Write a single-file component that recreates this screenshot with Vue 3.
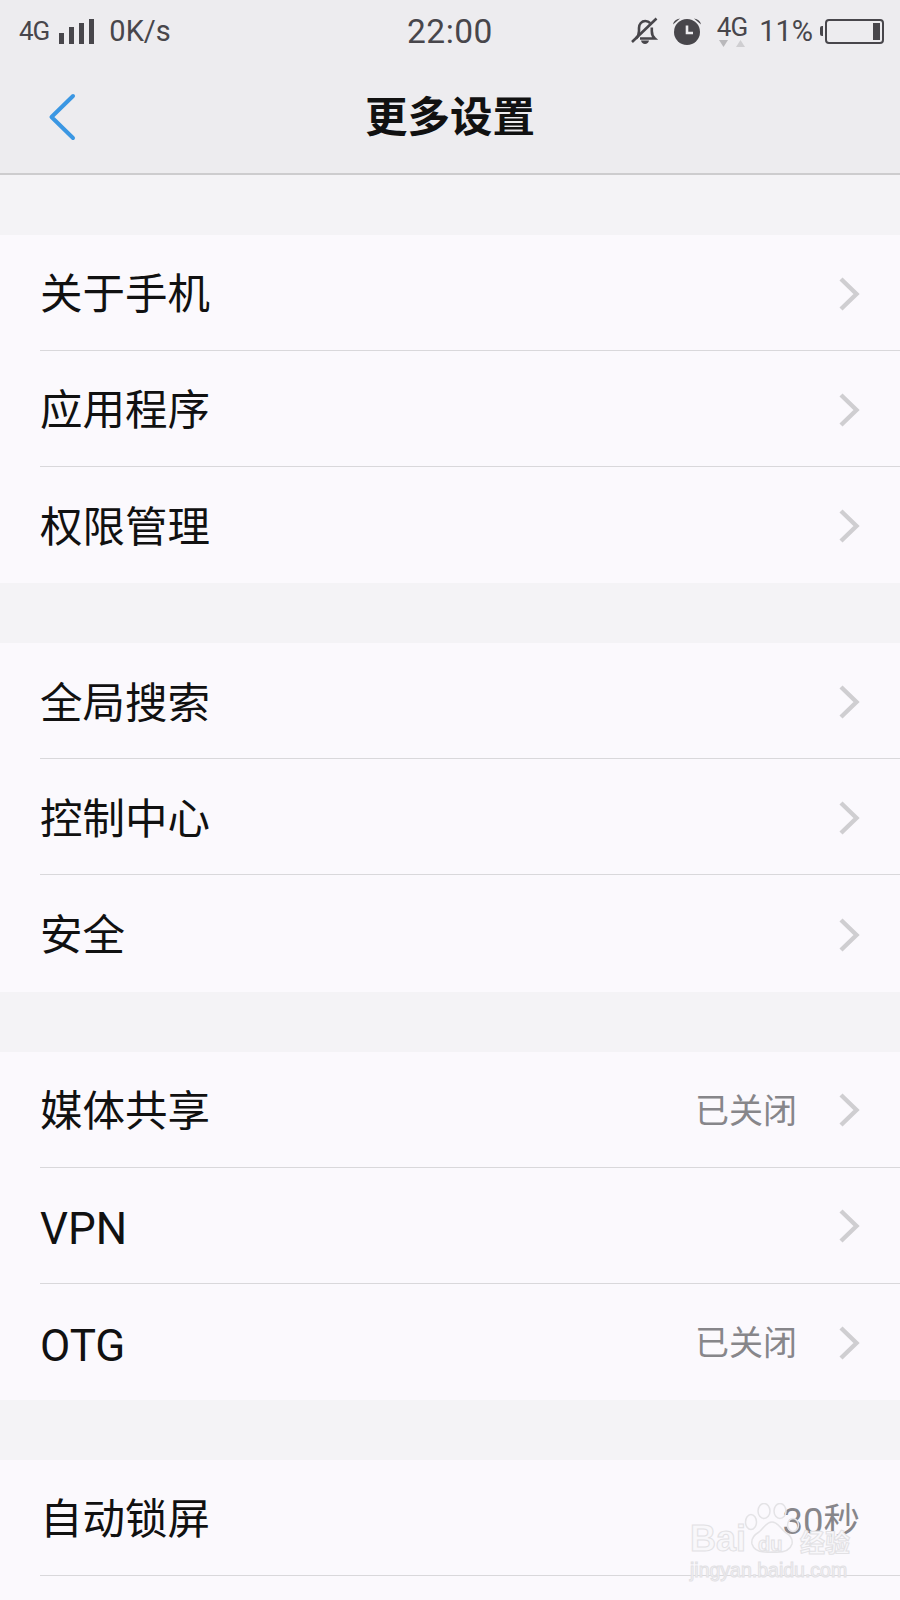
<template>
  <div class="page">
    <div class="topbar">
      <div class="status">
        <div class="status-left">
          <span class="net">4G</span>
          <div class="signal">
            <i v-for="h in bars" :key="h" :style="{ height: h + 'px' }"></i>
          </div>
          <span class="speed">0K/s</span>
        </div>
        <span class="time">22:00</span>
        <div class="status-right">
          <svg class="ic-bell" width="30" height="30" viewBox="0 0 30 30">
            <path d="M6 22.500c2.200-2 3-4 3-7.500V12c0-4 2.700-7 6.300-7 2 0 3.700.8 4.900 2.200M21.800 11.500V15c0 3.500.8 5.500 3 7.500H10" fill="none" stroke="#48464b" stroke-width="2.600" />
            <path d="M11 24.500h8c-.4 2.300-2 3.500-4 3.500s-3.600-1.200-4-3.500z" fill="#48464b" />
            <path d="M2 26 26.500 2.500" stroke="#48464b" stroke-width="2.600" />
          </svg>
          <svg class="ic-alarm" width="30" height="30" viewBox="0 0 30 30">
            <circle cx="15" cy="16" r="13" fill="#48464b" />
            <path d="M15 9.500V17h6" fill="none" stroke="#edecef" stroke-width="2.600" />
            <path d="M1 8.500C1.500 5 4 3 8 2.500zM29 8.500C28.500 5 26 3 22 2.500z" fill="#48464b" />
          </svg>
          <div class="lte">
            <span>4G</span>
            <svg width="28" height="9" viewBox="0 0 28 9">
              <path d="M1 1h9L5.500 8z" fill="#b9b8bb" />
              <path d="M18 8h9L22.500 1z" fill="#cfced1" />
            </svg>
          </div>
          <span class="pct">11%</span>
          <div class="battery">
            <i class="nub"></i>
            <div class="cell"><i></i></div>
          </div>
        </div>
      </div>
      <div class="navbar">
        <svg class="back" width="30" height="50" viewBox="0 0 30 50">
          <path d="M26 4 4.500 25 26 46" fill="none" stroke="#3b97e3" stroke-width="4" stroke-linecap="round" stroke-linejoin="round" />
        </svg>
        <span class="title">更多设置</span>
      </div>
    </div>

    <div v-for="(group, i) in groups" :key="i" class="group">
      <div v-for="row in group" :key="row.label" class="row">
        <div class="row-inner">
          <span class="label" :class="{ latin: /^[A-Z]+$/.test(row.label) }">{{ row.label }}</span>
          <span v-if="row.value" class="value" :class="{ flush: row.flush }">{{ row.value }}</span>
          <svg v-if="!row.flush && row.label" class="chev" width="22" height="36" viewBox="0 0 22 36">
            <path d="M3 3 18.500 18 3 33" fill="none" stroke="#cfced1" stroke-width="4.400" />
          </svg>
        </div>
      </div>
    </div>

    <div class="watermark">
      <svg class="paw" width="58" height="52" viewBox="0 0 58 52">
        <g fill="none" stroke="#e4e3e6" stroke-width="1.500">
          <ellipse cx="7" cy="19" rx="5.500" ry="7.500" />
          <ellipse cx="20" cy="8" rx="6" ry="7.500" />
          <ellipse cx="36" cy="8" rx="6" ry="7.500" />
          <ellipse cx="49" cy="22" rx="5.500" ry="6.500" />
          <path d="M28 19c-6 0-8 6-13 10-5 3-8 7-7 12 2 7 9 9 20 8 11 1 18-1 20-8 1-5-2-9-7-12-5-4-7-10-13-10z" />
        </g>
      </svg>
      <span class="wm-bai">Bai</span>
      <span class="wm-du">du</span>
      <span class="wm-jy">经验</span>
      <span class="wm-url">jingyan.baidu.com</span>
    </div>
  </div>
</template>

<script setup>
const bars = [11, 17, 21, 25]

const groups = [
  [{ label: '关于手机' }, { label: '应用程序' }, { label: '权限管理' }],
  [{ label: '全局搜索' }, { label: '控制中心' }, { label: '安全' }],
  [{ label: '媒体共享', value: '已关闭' }, { label: 'VPN' }, { label: 'OTG', value: '已关闭' }],
  [{ label: '自动锁屏', value: '30秒', flush: true }, { label: '' }],
]
</script>

<style>
body {
  background: #f4f3f6;
}
</style>

<style scoped>
.page {
  position: relative;
  width: 900px;
  height: 1600px;
  overflow: hidden;
  background: #f4f3f6;
  font-family: "Roboto", "Noto Sans CJK SC", sans-serif;
  color: #111;
}
.topbar {
  height: 175px;
  box-sizing: border-box;
  background: #edecef;
  border-bottom: 2px solid #cdccce;
  margin-bottom: 60px;
}
.status {
  height: 62px;
  display: flex;
  align-items: center;
  position: relative;
  color: #48464b;
  padding: 0 16px 0 19px;
  justify-content: space-between;
}
.status-left {
  display: flex;
  align-items: center;
}
.net {
  font-size: 26px;
  letter-spacing: -1px;
}
.signal {
  display: flex;
  align-items: flex-end;
  gap: 5px;
  margin: 0 0 0 10px;
  height: 26px;
}
.signal i {
  width: 5px;
  background: #48464b;
}
.speed {
  font-size: 29px;
  margin-left: 15px;
}
.time {
  position: absolute;
  left: 407px;
  font-size: 33.500px;
  letter-spacing: 0.5px;
}
.status-right {
  display: flex;
  align-items: center;
}
.ic-alarm {
  margin-left: 12px;
}
.lte {
  margin-left: 15px;
  display: flex;
  flex-direction: column;
  align-items: center;
  line-height: 26px;
  font-size: 26px;
  letter-spacing: -1px;
}
.lte svg {
  display: block;
  margin-top: -1px;
}
.pct {
  font-size: 29px;
  margin-left: 12px;
}
.battery {
  display: flex;
  align-items: center;
  margin-left: 7px;
}
.nub {
  width: 3px;
  height: 10px;
  background: #48464b;
  border-radius: 2px 0 0 2px;
  margin-right: 2px;
}
.cell {
  width: 59px;
  height: 25px;
  box-sizing: border-box;
  border: 2px solid #48464b;
  border-radius: 4px;
  display: flex;
  justify-content: flex-end;
  padding: 2px;
}
.cell i {
  width: 7px;
  background: #48464b;
}
.navbar {
  height: 111px;
  position: relative;
  display: flex;
  align-items: center;
  justify-content: center;
}
.back {
  position: absolute;
  left: 47px;
  top: 30px;
}
.title {
  font-size: 42.500px;
  font-weight: 700;
  line-height: 1;
  margin-top: 2px;
}
.group {
  background: #fbf9fd;
  margin-bottom: 60px;
}
.row {
  height: 116.100px;
  padding-left: 40px;
  box-sizing: border-box;
}
.row-inner {
  height: 100%;
  box-sizing: border-box;
  display: flex;
  align-items: center;
  padding-right: 40px;
  border-bottom: 1.500px solid #d9d8db;
}
.row:nth-child(3) .row-inner {
  border-bottom: none;
}
.label {
  font-size: 42.500px;
  line-height: 1;
  flex: 1;
  position: relative;
  top: 3px;
}
.label.latin {
  font-size: 44px;
  top: 4px;
}
.value {
  font-size: 34px;
  color: #87868a;
  margin-right: 41px;
  position: relative;
  top: -1px;
}
.value.flush {
  margin-right: 0;
  font-size: 36.500px;
  top: 1px;
}
.chev {
  display: block;
  position: relative;
  top: 1px;
}
.watermark {
  position: absolute;
  left: 690px;
  top: 1500px;
  width: 170px;
  height: 90px;
  font-family: "Liberation Sans", "Noto Sans CJK SC", sans-serif;
  color: #f8f7fa;
  -webkit-text-stroke: 1px #e2e1e4;
}
.paw {
  position: absolute;
  left: 54px;
  top: 3px;
}
.wm-bai {
  position: absolute;
  left: 0;
  top: 18px;
  line-height: 42px;
  font-size: 36px;
  font-weight: 700;
}
.wm-du {
  position: absolute;
  left: 68px;
  top: 32px;
  line-height: 24px;
  font-size: 20px;
  font-weight: 700;
}
.wm-jy {
  position: absolute;
  left: 110px;
  top: 28px;
  line-height: 30px;
  font-size: 25px;
  font-weight: 700;
  white-space: nowrap;
}
.wm-url {
  position: absolute;
  left: 0;
  top: 58px;
  line-height: 24px;
  font-size: 19.500px;
  white-space: nowrap;
}
</style>
